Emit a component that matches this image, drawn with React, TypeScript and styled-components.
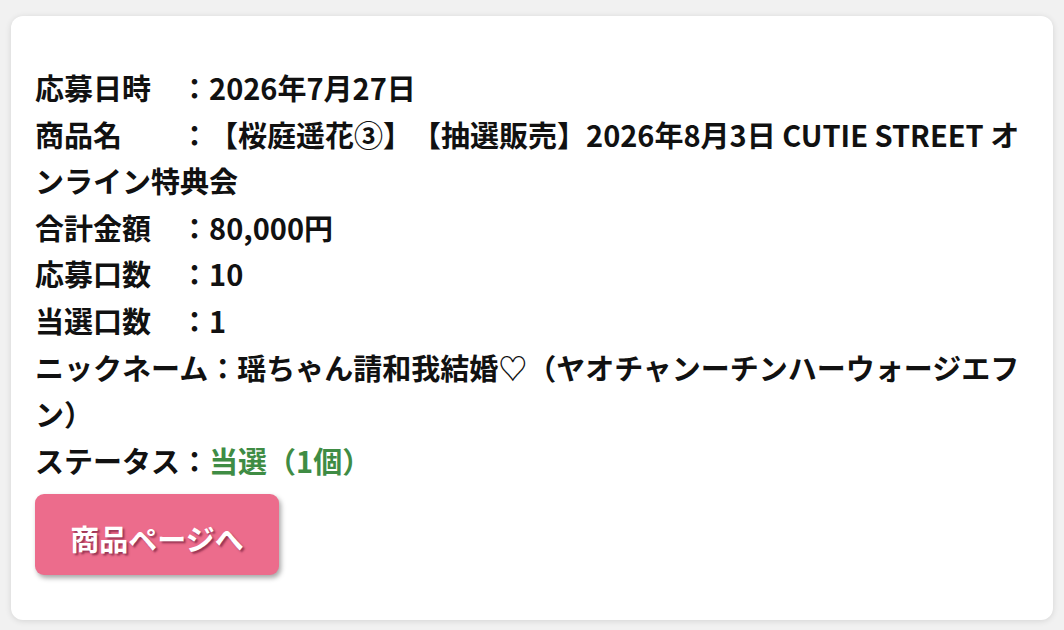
import styled, { createGlobalStyle } from "styled-components"

const GlobalStyle = createGlobalStyle`
  html, body {
    margin: 0;
    padding: 0;
    background: #f1f1f1;
  }
  body {
    font-family: "Noto Sans CJK JP", "Noto Sans", sans-serif;
  }
`

const Page = styled.div`
  padding: 16px 11px 10px;
`

const Card = styled.div`
  background: #fff;
  border-radius: 12px;
  box-shadow: 0 1px 6px rgba(0, 0, 0, 0.12);
  height: 604px;
  box-sizing: border-box;
  padding: 48px 22px 0 24px;
`

const Details = styled.div`
  font-size: 29px;
  font-weight: 700;
  line-height: 46.6px;
  color: #111;
  text-spacing-trim: space-all;
`

const Row = styled.div``

const Label = styled.span``

const Value = styled.span<{ $tone?: "win" }>`
  color: ${({ $tone }) => ($tone === "win" ? "#3f8c44" : "inherit")};
`

const PageButton = styled.button`
  margin-top: 11px;
  width: 244px;
  height: 81px;
  border: none;
  border-radius: 9px;
  background: #ec6c8c;
  color: #fff;
  font-family: inherit;
  font-size: 29px;
  font-weight: 700;
  padding: 6px 0 0;
  text-shadow: 2px 2px 2px rgba(120, 30, 60, 0.7);
  box-shadow: 2px 3px 5px rgba(0, 0, 0, 0.35);
  cursor: pointer;
`

type Item = {
  label: string
  value: string
  tone?: "win"
}

const items: Item[] = [
  { label: "応募日時　", value: "2026年7月27日" },
  {
    label: "商品名　　",
    value: "【桜庭遥花③】【抽選販売】2026年8月3日 CUTIE STREET オンライン特典会",
  },
  { label: "合計金額　", value: "80,000円" },
  { label: "応募口数　", value: "10" },
  { label: "当選口数　", value: "1" },
  {
    label: "ニックネーム",
    value: "瑶ちゃん請和我結婚♡（ヤオチャンーチンハーウォージエフン）",
  },
  { label: "ステータス", value: "当選（1個）", tone: "win" },
]

export default function App() {
  return (
    <>
      <GlobalStyle />
      <Page>
        <Card>
          <Details>
            {items.map((item) => (
              <Row key={item.label}>
                <Label>{item.label}：</Label>
                <Value $tone={item.tone}>{item.value}</Value>
              </Row>
            ))}
          </Details>
          <PageButton>商品ページへ</PageButton>
        </Card>
      </Page>
    </>
  )
}
